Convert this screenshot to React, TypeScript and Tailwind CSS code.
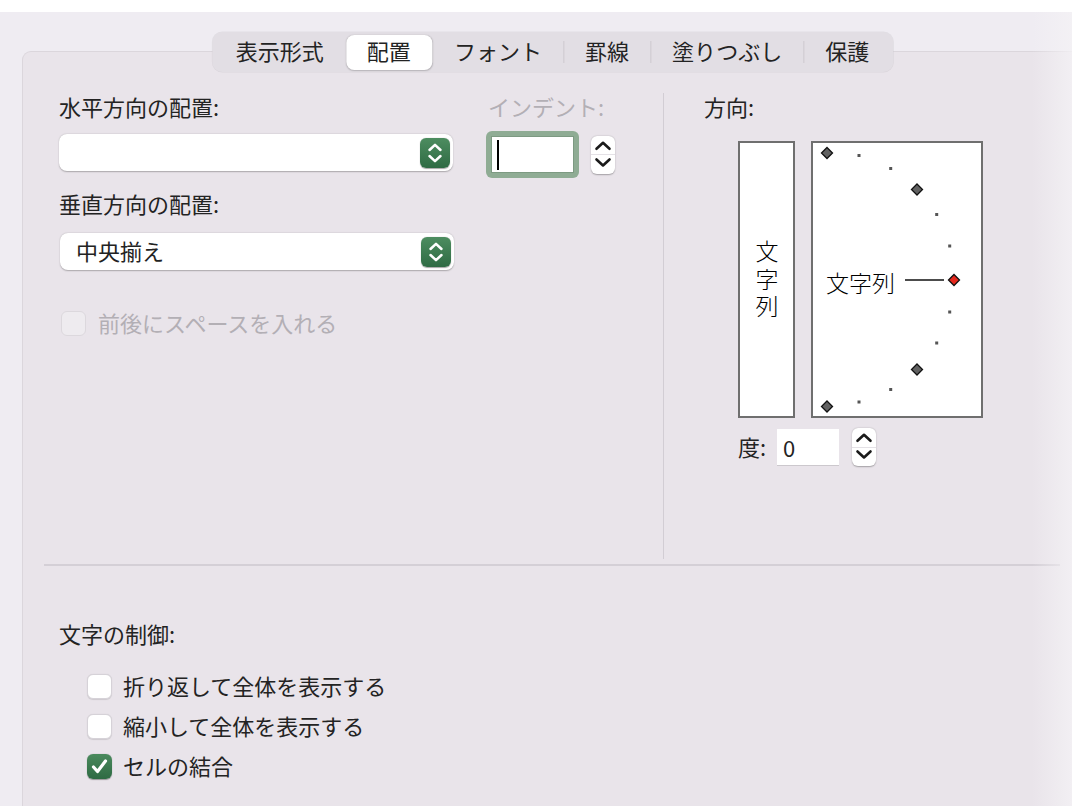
import { Fragment } from 'react';

const tabs = ['表示形式', '配置', 'フォント', '罫線', '塗りつぶし', '保護'];
const activeTab = 1;

// dial marks, measured relative to the dial's inner box
const diamonds = [
  { x: 14, y: 10 },
  { x: 104, y: 46.5 },
  { x: 104, y: 226.5 },
  { x: 14, y: 263.5 },
];
const dots = [
  { x: 46, y: 12.5 },
  { x: 77.7, y: 25.5 },
  { x: 123.7, y: 71.5 },
  { x: 136.7, y: 103 },
  { x: 136.7, y: 169 },
  { x: 123.7, y: 200 },
  { x: 77.7, y: 246.5 },
  { x: 46, y: 259 },
];

function diamond(x: number, y: number, s = 5.5) {
  return `${x},${y - s} ${x + s},${y} ${x},${y + s} ${x - s},${y}`;
}

function PopupButton({ value = '' }: { value?: string }) {
  return (
    <div className="flex items-center justify-between h-[37px] rounded-[8px] bg-white shadow-[0_0.5px_1.5px_rgba(0,0,0,0.28)] pl-[16px] pr-[3px]">
      <span className="text-[22px] leading-none pb-[4px] text-[#222]">{value}</span>
      <div className="w-[30px] h-[30px] rounded-[6px] bg-gradient-to-b from-[#4d8d60] to-[#2f6b44] shadow-[0_0.5px_1px_rgba(0,0,0,0.35)]">
        <svg width="30" height="30" viewBox="0 0 30 30" fill="none" stroke="white" strokeWidth="2.5" strokeLinecap="round" strokeLinejoin="round">
          <path d="M9.5 12 L15 6.8 L20.5 12" />
          <path d="M9.5 18 L15 23.2 L20.5 18" />
        </svg>
      </div>
    </div>
  );
}

function Stepper() {
  return (
    <div className="relative w-[24px] h-[38px] rounded-[6px] bg-white shadow-[0_0.5px_1.5px_rgba(0,0,0,0.3)]">
      <div className="absolute left-0 right-0 top-[18.5px] h-px bg-[#e4e1e6]" />
      <svg width="24" height="38" viewBox="0 0 24 38" fill="none" stroke="#1a1a1a" strokeWidth="2.6" strokeLinecap="round" strokeLinejoin="round">
        <path d="M5.5 12.8 L12 6.8 L18.5 12.8" />
        <path d="M5.5 23.5 L12 29.5 L18.5 23.5" />
      </svg>
    </div>
  );
}

function Checkbox({ checked = false, disabled = false }: { checked?: boolean; disabled?: boolean }) {
  if (disabled) {
    return <div className="w-[25px] h-[25px] rounded-[6px] bg-[#eeebef] border border-[#dcd8dd]" />;
  }
  if (checked) {
    return (
      <div className="w-[25px] h-[25px] rounded-[6px] bg-gradient-to-b from-[#4a8a5d] to-[#2e6a43] shadow-[0_0.5px_1px_rgba(0,0,0,0.35)]">
        <svg width="25" height="25" viewBox="0 0 25 25" fill="none" stroke="white" strokeWidth="3.2" strokeLinecap="round" strokeLinejoin="round">
          <path d="M6.5 13 L10.5 17.5 L18.5 7" />
        </svg>
      </div>
    );
  }
  return <div className="w-[25px] h-[25px] rounded-[6px] bg-white border border-[#d6d2d8] shadow-[0_0.5px_1px_rgba(0,0,0,0.12)]" />;
}

export default function App() {
  return (
    <div className="relative w-[1072px] h-[806px] overflow-hidden bg-[#efecf2] text-[#232323] font-['Noto_Sans_CJK_JP','Noto_Sans',sans-serif]">
      <div className="h-[12px] bg-white" />

      <div className="relative ml-[22px] mt-[39px] w-[1060px] h-[760px] rounded-tl-[9px] border-l border-t border-[#dbd6dc] bg-[#e9e4ea]">
        {/* tab bar */}
        <div className="absolute left-1/2 -translate-x-1/2 -top-[20px] w-max whitespace-nowrap flex items-center h-[40px] p-[3px] rounded-[10px] bg-[#e2dee4] shadow-[0_0_0_0.5px_rgba(0,0,0,0.06)]">
          {tabs.map((t, i) => (
            <Fragment key={t}>
              {i > 0 && (
                <span
                  className={`w-px h-[22px] ${i === activeTab || i - 1 === activeTab ? 'bg-transparent' : 'bg-[#cdc8cf]'}`}
                />
              )}
              <div
                className={`h-[35px] px-[21px] pb-[4px] flex items-center rounded-[8px] text-[22px] leading-none ${
                  i === activeTab ? 'bg-white shadow-[0_0.5px_1.5px_rgba(0,0,0,0.2)]' : ''
                }`}
              >
                {t}
              </div>
            </Fragment>
          ))}
        </div>

        {/* upper section */}
        <div className="flex pt-[41px] pl-[21px]">
          <div className="w-[619px] pl-[15px]">
            <div className="flex">
              <div className="w-[394px]">
                <div className="h-[30px] leading-[26px] text-[22px]">水平方向の配置:</div>
                <div className="mt-[11px]">
                  <PopupButton />
                </div>
              </div>
              <div className="ml-[33px]">
                <div className="h-[30px] leading-[26px] text-[22px] pl-[2px] text-[#b3afb5]">インデント:</div>
                <div className="mt-[8px] flex items-center">
                  <div className="w-[93px] h-[47px] rounded-[6px] bg-[#8fac94] p-[5px]">
                    <div className="h-full bg-white border border-[#7d9a82] flex items-center pl-[5px]">
                      <div className="w-[2px] h-[30px] bg-black" />
                    </div>
                  </div>
                  <div className="ml-[12px]">
                    <Stepper />
                  </div>
                </div>
              </div>
            </div>

            <div className="mt-[12px] h-[30px] leading-[26px] text-[22px]">垂直方向の配置:</div>
            <div className="mt-[13px] w-[394px] ml-px">
              <PopupButton value="中央揃え" />
            </div>

            <div className="mt-[38px] h-[30px] flex items-center pl-[2px]">
              <Checkbox disabled />
              <span className="ml-[12px] text-[22px] leading-none pb-[3px] text-[#b3afb5]">前後にスペースを入れる</span>
            </div>
          </div>

          <div className="w-px h-[466px] bg-[#d2cdd4]" />

          <div className="pl-[40px]">
            <div className="h-[30px] leading-[26px] text-[22px]">方向:</div>
            <div className="mt-[18px] ml-[34px] flex gap-[16px]">
              <div className="w-[57px] h-[277px] bg-white border-2 border-[#6f6f6f] flex items-center justify-center pt-[4px]">
                <span className="[writing-mode:vertical-rl] text-[23px] leading-none tracking-[4.5px] font-light text-[#000]">
                  文字列
                </span>
              </div>
              <div className="relative w-[172px] h-[277px] bg-white border-2 border-[#6f6f6f]">
                <svg className="absolute inset-0" width="168" height="273" viewBox="0 0 168 273">
                  {dots.map((d, i) => (
                    <rect key={i} x={d.x - 1.5} y={d.y - 1.5} width="3" height="3" fill="#555" />
                  ))}
                  {diamonds.map((d, i) => (
                    <polygon key={i} points={diamond(d.x, d.y)} fill="#616161" stroke="#111" strokeWidth="1.3" />
                  ))}
                  <line x1="92" y1="137" x2="131" y2="137" stroke="#111" strokeWidth="1.4" />
                  <polygon points={diamond(141, 137)} fill="#e5281d" stroke="#111" strokeWidth="1.3" />
                </svg>
                <span className="absolute left-[13px] top-[124px] text-[23px] leading-[30px] font-light text-[#000]">
                  文字列
                </span>
              </div>
            </div>
            <div className="mt-[10px] ml-[34px] flex items-center">
              <span className="w-[39px] text-[22px] leading-none pb-[3px]">度:</span>
              <div className="w-[62px] h-[36px] bg-white shadow-[0_1px_0_rgba(0,0,0,0.12)] flex items-center pl-[6px] text-[22px]">
                0
              </div>
              <div className="ml-[13px]">
                <Stepper />
              </div>
            </div>
          </div>
        </div>

        {/* divider */}
        <div className="mt-[5px] ml-[21px] w-[1016px] h-[2px] bg-[#d4cfd6]" />

        {/* text control */}
        <div className="mt-[54px] pl-[36px] h-[30px] leading-[26px] text-[22px]">文字の制御:</div>
        <div className="mt-[16px] pl-[64px]">
          {[
            { label: '折り返して全体を表示する', checked: false },
            { label: '縮小して全体を表示する', checked: false },
            { label: 'セルの結合', checked: true },
          ].map((row) => (
            <div key={row.label} className="h-[40px] flex items-center">
              <Checkbox checked={row.checked} />
              <span className="ml-[11px] text-[22px] leading-none pb-[3px]">{row.label}</span>
            </div>
          ))}
        </div>
      </div>

      {/* faint light edge on the right */}
      <div className="absolute right-0 top-[12px] bottom-0 w-[40px] bg-gradient-to-r from-transparent to-[#f4f2f5]/80" />
    </div>
  );
}
